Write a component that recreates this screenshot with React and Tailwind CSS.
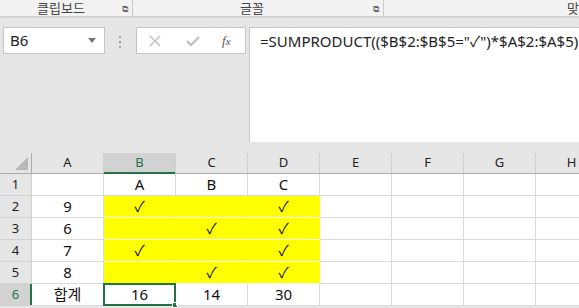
import React from "react";

const cols = ["A", "B", "C", "D", "E", "F", "G", "H"];

const rows = [
  ["", "A", "B", "C"],
  ["9", "✓", "", "✓"],
  ["6", "", "✓", "✓"],
  ["7", "✓", "", "✓"],
  ["8", "", "✓", "✓"],
  ["합계", "16", "14", "30"],
];

const font = { fontFamily: '"Noto Sans", "Noto Sans CJK KR", sans-serif' };

function Cell({ r, c, value }) {
  const yellow = r >= 1 && r <= 4 && c >= 1 && c <= 3;
  const selected = r === 5 && c === 1;
  return (
    <div
      className={`relative flex h-[22px] w-[72px] shrink-0 items-center justify-center border-b border-r text-[15px] text-[#111] ${
        yellow
          ? "border-b-white border-r-[#ffff00] bg-[#ffff00]"
          : "border-[#dadada] bg-white"
      } ${c === 3 && yellow ? "border-r-[#dadada]" : ""}`}
    >
      {value}
      {selected && (
        <>
          <div className="absolute -left-px -top-px bottom-[-1px] right-[-1px] border-2 border-[#217346]" />
          <div className="absolute bottom-[-3px] right-[-3px] h-[6px] w-[6px] border border-white bg-[#217346]" />
        </>
      )}
    </div>
  );
}

export default function App() {
  return (
    <div
      className="h-[308px] w-[579px] overflow-hidden bg-[#e6e6e6]"
      style={font}
    >
      {/* ribbon group labels */}
      <div className="flex h-[16px] items-center bg-[#f3f3f3] text-[13px] leading-none text-[#444] shadow-[0_1px_2px_rgba(0,0,0,0.15)]">
        <div className="flex h-full w-[133px] items-center border-r border-[#c8c8c8]">
          <span className="ml-[37px] flex-1">클립보드</span>
          <span className="mr-[4px] text-[9px] text-[#666]">⧉</span>
        </div>
        <div className="flex h-full w-[251px] items-center border-r border-[#c8c8c8]">
          <span className="ml-[107px] flex-1">글꼴</span>
          <span className="mr-[4px] text-[9px] text-[#666]">⧉</span>
        </div>
        <div className="flex-1 text-right whitespace-nowrap">
          <span className="mr-[-12px]">맞춤</span>
        </div>
      </div>

      {/* formula bar */}
      <div className="mt-[11px] flex h-[115px] items-start">
        <div className="ml-[3px] flex h-[27px] w-[102px] items-center justify-between border border-[#c6c6c6] bg-white pl-[6px] pr-[8px] text-[15px] text-[#222]">
          <span>B6</span>
          <svg width="8" height="5" viewBox="0 0 8 5">
            <path d="M0 0 L8 0 L4 5 Z" fill="#777" />
          </svg>
        </div>
        <div className="ml-[13px] mt-[9px] flex w-[4px] flex-col items-center gap-[3px]">
          <div className="h-[2px] w-[2px] bg-[#a0a0a0]" />
          <div className="h-[2px] w-[2px] bg-[#a0a0a0]" />
          <div className="h-[2px] w-[2px] bg-[#a0a0a0]" />
        </div>
        <div className="ml-[14px] flex h-[27px] w-[110px] items-center border border-[#c6c6c6] bg-white text-[#bdbdbd]">
          <svg className="ml-[12px]" width="12" height="12" viewBox="0 0 12 12">
            <path d="M1 1 L11 11 M11 1 L1 11" stroke="#bdbdbd" strokeWidth="1.4" />
          </svg>
          <svg className="ml-[25px]" width="14" height="12" viewBox="0 0 14 12">
            <path d="M1 6 L5 10 L13 2" stroke="#bdbdbd" strokeWidth="2" fill="none" />
          </svg>
          <span
            className="ml-[22px] text-[13px] italic text-[#555]"
            style={{ fontFamily: '"Liberation Serif", serif' }}
          >
            f<span className="text-[11px]">x</span>
          </span>
        </div>
        <div className="ml-[3px] h-full flex-1 border-l border-t border-[#c6c6c6] bg-white pl-[10px] pt-[2px] text-[15px] text-[#222] whitespace-nowrap">
          =SUMPRODUCT(($B$2:$B$5="✓")*$A$2:$A$5)
        </div>
      </div>

      {/* sheet grid */}
      <div className="mt-[11px]">
        <div className="flex h-[21px] border-b border-[#ababab] text-[13px] text-[#222]">
          <div className="relative h-full w-[32px] shrink-0 border-r border-[#ababab]">
            <svg className="absolute bottom-[3px] right-[3px]" width="13" height="13" viewBox="0 0 13 13">
              <path d="M13 0 L13 13 L0 13 Z" fill="#b8b8b8" />
            </svg>
          </div>
          {cols.map((c) => (
            <div
              key={c}
              className={`relative flex h-full w-[72px] shrink-0 items-center justify-center border-r border-[#d0d0d0] ${
                c === "B" ? "bg-[#d2d2d2] text-[#217346]" : ""
              }`}
            >
              {c}
              {c === "B" && (
                <div className="absolute bottom-[-1px] left-0 right-0 h-[2px] bg-[#217346]" />
              )}
            </div>
          ))}
        </div>
        {rows.map((row, r) => (
          <div key={r} className="flex">
            <div
              className={`relative flex h-[22px] w-[32px] shrink-0 items-center justify-center border-b border-r border-[#d0d0d0] text-[13px] ${
                r === 5 ? "bg-[#d2d2d2] text-[#217346]" : "text-[#222]"
              }`}
            >
              {r + 1}
              {r === 5 && (
                <div className="absolute bottom-0 right-[-1px] top-0 w-[2px] bg-[#217346]" />
              )}
            </div>
            {cols.map((c, ci) => (
              <Cell key={c} r={r} c={ci} value={row[ci] || ""} />
            ))}
          </div>
        ))}
      </div>
    </div>
  );
}
